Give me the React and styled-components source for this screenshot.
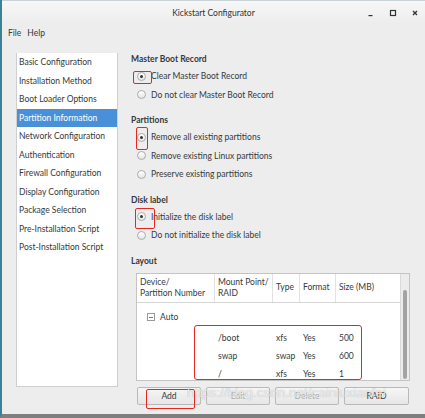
import styled, { createGlobalStyle } from "styled-components";

const GlobalStyle = createGlobalStyle`
  html, body {
    margin: 0;
    padding: 0;
    background: #ededed;
  }
  body {
    font-family: Lato, "Liberation Sans", sans-serif;
  }
`;

const Window = styled.div`
  position: relative;
  width: 425px;
  height: 418px;
  box-sizing: border-box;
  display: flex;
  flex-direction: column;
  background: #ededed;
  border-left: 2px solid #3d8197;
  border-bottom: 4px solid #7f7f7f;
  overflow: hidden;
  color: #333a3c;
  font-size: 8.5px;
`;

const TitleBar = styled.div`
  position: relative;
  height: 24px;
  display: flex;
  align-items: center;
  justify-content: center;
  background: linear-gradient(#f7f7f7, #ededed);
  border-top: 1px solid #c8d3d8;
  box-sizing: border-box;
  font-size: 8.5px;
  color: #2e3436;
`;

const Controls = styled.div`
  position: absolute;
  right: 6px;
  top: 0;
  height: 100%;
  display: flex;
  align-items: center;
  gap: 14px;
`;

const MenuBar = styled.div`
  height: 18px;
  display: flex;
  align-items: center;
  gap: 6px;
  padding-left: 6px;
`;

const Body = styled.div`
  display: flex;
  padding: 11px 0 0 14px;
`;

const Sidebar = styled.div`
  width: 102px;
  height: 334px;
  box-sizing: border-box;
  background: #fff;
  border: 1px solid #cfcfcf;
  border-top: none;
`;

const SideItem = styled.div`
  height: 18.5px;
  line-height: 18.5px;
  padding-left: 2px;
  white-space: nowrap;
  overflow: hidden;
  background: ${(p) => (p.$active ? "#4a90d9" : "transparent")};
  color: ${(p) => (p.$active ? "#fff" : "inherit")};
`;

const Panel = styled.div`
  margin-left: 13px;
  width: 280px;
  display: flex;
  flex-direction: column;
`;

const Section = styled.div`
  margin-top: ${(p) => (p.$first ? "0" : "10px")};
`;

const Heading = styled.div`
  height: 12px;
  line-height: 12px;
  font-weight: bold;
  margin-bottom: 2px;
`;

const RadioRow = styled.div`
  position: relative;
  height: 18.5px;
  display: flex;
  align-items: center;
  gap: 5px;
  padding-left: 6px;
`;

const Radio = styled.span`
  width: 9px;
  height: 9px;
  box-sizing: border-box;
  border-radius: 50%;
  border: 1px solid #ababab;
  background: linear-gradient(#ffffff, #e6e6e6);
  display: flex;
  align-items: center;
  justify-content: center;
  &::after {
    content: "";
    width: 3px;
    height: 3px;
    border-radius: 50%;
    background: ${(p) => (p.$checked ? "#2e3436" : "transparent")};
  }
`;

const Mark = styled.span`
  position: absolute;
  left: ${(p) => p.$l}px;
  top: ${(p) => p.$t}px;
  width: ${(p) => p.$w}px;
  height: ${(p) => p.$h}px;
  border: 1px solid #e5281f;
  border-radius: 2px;
  box-sizing: border-box;
  pointer-events: none;
`;

const Table = styled.div`
  margin: 4px 0 0 5px;
  width: 274px;
  height: 108px;
  box-sizing: border-box;
  background: #fff;
  border: 1px solid #c4c4c4;
  display: flex;
`;

const TableMain = styled.div`
  flex: 1;
  display: flex;
  flex-direction: column;
`;

const HeaderRow = styled.div`
  height: 30px;
  display: grid;
  grid-template-columns: 78px 58px 27px 36px 1fr;
  border-bottom: 1px solid #d6d6d6;
  box-sizing: border-box;
`;

const HeadCell = styled.div`
  display: flex;
  align-items: center;
  padding-left: 3px;
  line-height: 11px;
  white-space: nowrap;
  border-right: ${(p) => (p.$last ? "none" : "1px solid #e2e2e2")};
`;

const TableBody = styled.div`
  padding-top: 6px;
`;

const AutoRow = styled.div`
  height: 17px;
  display: flex;
  align-items: center;
  gap: 5px;
  padding-left: 10px;
`;

const Expander = styled.span`
  position: relative;
  width: 6px;
  height: 6px;
  border: 1px solid #9a9a9a;
  &::after {
    content: "";
    position: absolute;
    left: 1px;
    right: 1px;
    top: 2.5px;
    height: 1px;
    background: #777;
  }
`;

const Group = styled.div`
  margin: -1px 0 0 57px;
  width: 168px;
  height: 55px;
  box-sizing: border-box;
  padding-top: 3px;
  border: 1px solid #e5281f;
  border-radius: 3px;
`;

const DataRow = styled.div`
  height: 18px;
  display: grid;
  grid-template-columns: 21px 58px 27px 36px 1fr;
  align-items: center;
`;

const Cell = styled.div`
  padding-left: 2px;
`;

const ScrollTrack = styled.div`
  width: 8px;
  background: #ececec;
  border-left: 1px solid #dadada;
  display: flex;
  flex-direction: column;
  padding-top: 16px;
  padding-bottom: 1px;
  align-items: center;
`;

const Thumb = styled.div`
  flex: 1;
  width: 4px;
  border-radius: 3px;
  background: #a3a3a3;
`;

const Buttons = styled.div`
  margin: 6px 0 0 6px;
  display: grid;
  grid-template-columns: 64px 64px 64px 65px;
  gap: 5px;
`;

const Button = styled.div`
  position: relative;
  height: 18px;
  box-sizing: border-box;
  border: 1px solid #b9b9b9;
  border-radius: 2px;
  background: linear-gradient(#f6f6f6, #e6e6e6);
  display: flex;
  align-items: center;
  justify-content: center;
  color: ${(p) => (p.$disabled ? "#a9adad" : "inherit")};
`;

const Watermark = styled.div`
  position: absolute;
  left: 185px;
  top: 385px;
  font-family: "Liberation Sans", sans-serif;
  font-size: 13.5px;
  color: rgba(255, 255, 255, 0.7);
  text-shadow: 0 0 1px rgba(120, 120, 120, 0.6);
  white-space: nowrap;
  pointer-events: none;
`;

const sideItems = [
  "Basic Configuration",
  "Installation Method",
  "Boot Loader Options",
  "Partition Information",
  "Network Configuration",
  "Authentication",
  "Firewall Configuration",
  "Display Configuration",
  "Package Selection",
  "Pre-Installation Script",
  "Post-Installation Script",
];

const partitions = [
  ["/boot", "xfs", "Yes", "500"],
  ["swap", "swap", "Yes", "600"],
  ["/", "xfs", "Yes", "1"],
];

const App = () => {
  return (
    <>
      <GlobalStyle />
      <Window>
        <TitleBar>
          Kickstart Configurator
          <Controls>
            <svg width="8" height="8" viewBox="0 0 8 8">
              <rect x="1.5" y="6" width="4" height="1.2" fill="#2e3436" />
            </svg>
            <svg width="8" height="8" viewBox="0 0 8 8">
              <rect x="1.5" y="1.5" width="5" height="5" fill="none" stroke="#2e3436" strokeWidth="1.2" />
            </svg>
            <svg width="8" height="8" viewBox="0 0 8 8">
              <path d="M2 2 L6 6 M6 2 L2 6" stroke="#2e3436" strokeWidth="1.3" />
            </svg>
          </Controls>
        </TitleBar>
        <MenuBar>
          <span>File</span>
          <span>Help</span>
        </MenuBar>
        <Body>
          <Sidebar>
            {sideItems.map((item) => (
              <SideItem key={item} $active={item === "Partition Information"}>
                {item}
              </SideItem>
            ))}
          </Sidebar>
          <Panel>
            <Section $first>
              <Heading>Master Boot Record</Heading>
              <RadioRow>
                <Radio $checked />
                Clear Master Boot Record
                <Mark $l={2} $t={4} $w={19} $h={13} />
              </RadioRow>
              <RadioRow>
                <Radio />
                Do not clear Master Boot Record
              </RadioRow>
            </Section>
            <Section>
              <Heading>Partitions</Heading>
              <RadioRow>
                <Radio $checked />
                Remove all existing partitions
                <Mark $l={5} $t={-1} $w={12} $h={23} />
              </RadioRow>
              <RadioRow>
                <Radio />
                Remove existing Linux partitions
              </RadioRow>
              <RadioRow>
                <Radio />
                Preserve existing partitions
              </RadioRow>
            </Section>
            <Section>
              <Heading>Disk label</Heading>
              <RadioRow>
                <Radio $checked />
                Initialize the disk label
                <Mark $l={4} $t={0} $w={20} $h={21} />
              </RadioRow>
              <RadioRow>
                <Radio />
                Do not initialize the disk label
              </RadioRow>
            </Section>
            <Section>
              <Heading>Layout</Heading>
            </Section>
            <Table>
              <TableMain>
                <HeaderRow>
                  <HeadCell>
                    Device/
                    <br />
                    Partition Number
                  </HeadCell>
                  <HeadCell>
                    Mount Point/
                    <br />
                    RAID
                  </HeadCell>
                  <HeadCell>Type</HeadCell>
                  <HeadCell>Format</HeadCell>
                  <HeadCell $last>Size (MB)</HeadCell>
                </HeaderRow>
                <TableBody>
                  <AutoRow>
                    <Expander />
                    Auto
                  </AutoRow>
                  <Group>
                    {partitions.map((row) => (
                      <DataRow key={row[0]}>
                        <span />
                        {row.map((value, i) => (
                          <Cell key={i}>{value}</Cell>
                        ))}
                      </DataRow>
                    ))}
                  </Group>
                </TableBody>
              </TableMain>
              <ScrollTrack>
                <Thumb />
              </ScrollTrack>
            </Table>
            <Buttons>
              <Button>
                Add
                <Mark $l={8} $t={1} $w={49} $h={20} />
              </Button>
              <Button $disabled>Edit</Button>
              <Button $disabled>Delete</Button>
              <Button>RAID</Button>
            </Buttons>
          </Panel>
        </Body>
        <Watermark>https://blog.csdn.net/cainiuxianfei</Watermark>
      </Window>
    </>
  );
};

export default App;
